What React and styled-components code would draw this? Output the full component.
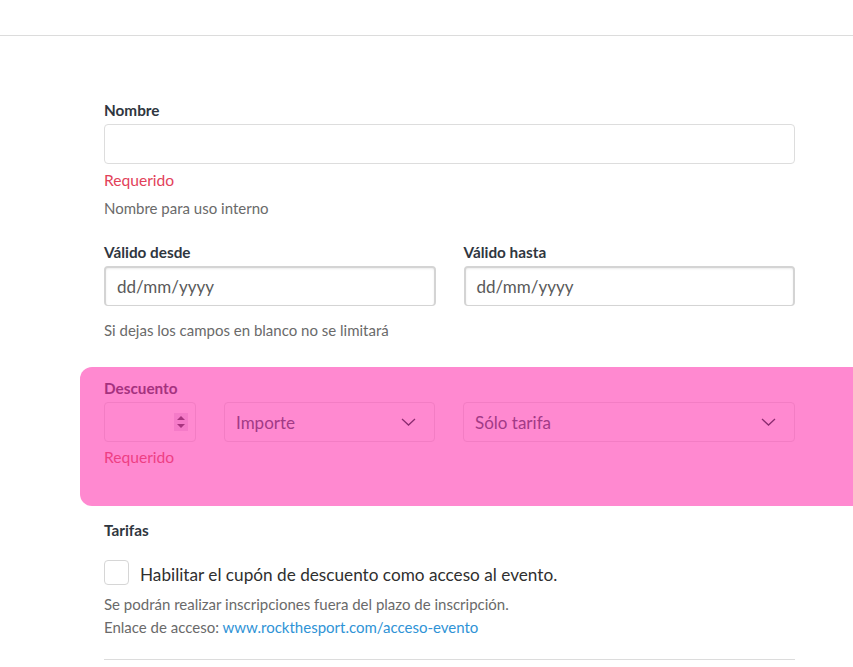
import React from "react";
import styled, { createGlobalStyle } from "styled-components";

const GlobalStyle = createGlobalStyle`
  html, body {
    margin: 0;
    padding: 0;
    background: #fff;
    font-family: Lato, "Open Sans", "Liberation Sans", sans-serif;
    overflow: hidden;
  }
`;

const Page = styled.div`
  width: 853px;
  height: 667px;
  overflow: hidden;
`;

const Header = styled.div`
  height: 35px;
  border-bottom: 1px solid #dcdcdc;
`;

const Form = styled.div`
  width: 691px;
  margin: 64px 0 0 104px;
`;

const Label = styled.div`
  font-size: 15.3px;
  line-height: 20px;
  font-weight: 700;
  color: ${p => (p.$pink ? "#a5327f" : "#2f3640")};
  margin-bottom: 4px;
`;

const TextInput = styled.div`
  box-sizing: border-box;
  height: 40px;
  border: 1px solid #dddddd;
  border-radius: 4px;
  background: #fff;
`;

const DateInput = styled.div`
  box-sizing: border-box;
  height: 40px;
  border: 2px solid #d4d4d4;
  border-bottom-width: 1px;
  border-radius: 4px;
  box-shadow: inset 0 1px 2px rgba(10, 10, 10, 0.08);
  padding: 0 11px;
  display: flex;
  align-items: center;
  font-size: 17px;
  color: #5a5a5a;
`;

const Error = styled.div`
  font-size: 15.6px;
  line-height: 22px;
  color: ${p => (p.$pink ? "#ee3f84" : "#e2415a")};
  margin-top: ${p => p.$top || 5}px;
`;

const Help = styled.div`
  font-size: 15px;
  line-height: ${p => p.$lh || 20}px;
  color: #6a6a6a;
  margin-top: ${p => p.$top || 0}px;
`;

const Link = styled.a`
  color: #2f93d6;
  text-decoration: none;
`;

const Field = styled.div`
  margin-top: ${p => p.$top || 0}px;
`;

const Row = styled.div`
  display: grid;
  grid-template-columns: ${p => p.$cols};
  column-gap: 28px;
`;

const Highlight = styled.div`
  margin: 27px -58px 0 -24px;
  padding: 11px 58px 38px 24px;
  background: #ff89d0;
  border-radius: 12px 0 0 12px;
`;

const PinkBox = styled.div`
  box-sizing: border-box;
  height: 40px;
  border: 1px solid #f37dc4;
  border-radius: 4px;
  padding: 0 18px 0 11px;
  display: flex;
  align-items: center;
  justify-content: space-between;
  font-size: 17px;
  color: #a23a86;
`;

const Spinner = styled.div`
  width: 14px;
  height: 18px;
  margin-right: -11px;
  margin-left: auto;
  background: #f57bc8;
  display: flex;
  align-items: center;
  justify-content: center;
`;

const Checkbox = styled.div`
  box-sizing: border-box;
  width: 25px;
  height: 25px;
  border: 1px solid #d6d6d6;
  border-radius: 4px;
  background: #fff;
`;

const CheckRow = styled.label`
  display: flex;
  align-items: center;
  gap: 11px;
  margin-top: 20px;
  height: 25px;
  font-size: 17.2px;
  color: #2f2f2f;
  & > span {
    margin-top: 3px;
  }
`;

const Divider = styled.div`
  border-top: 1px solid #dcdcdc;
  margin-top: 20px;
  padding-top: 3px;
`;

const Chevron = () => (
  <svg width="15" height="8" viewBox="0 0 15 8">
    <polyline points="1,1 7.5,7 14,1" fill="none" stroke="#8c2c70" strokeWidth="1.3" />
  </svg>
);

export default function App() {
  return (
    <Page>
      <GlobalStyle />
      <Header />
      <Form>
        <Field>
          <Label>Nombre</Label>
          <TextInput />
          <Error>Requerido</Error>
          <Help $top={7}>Nombre para uso interno</Help>
        </Field>

        <Field $top={24}>
          <Row $cols="1fr 1fr">
            <div>
              <Label>Válido desde</Label>
              <DateInput>dd/mm/yyyy</DateInput>
            </div>
            <div>
              <Label>Válido hasta</Label>
              <DateInput>dd/mm/yyyy</DateInput>
            </div>
          </Row>
          <Help $top={14}>Si dejas los campos en blanco no se limitará</Help>
        </Field>

        <Highlight>
          <Label $pink>Descuento</Label>
          <Row $cols="92px 211px 1fr">
            <PinkBox>
              <Spinner>
                <svg width="8" height="12" viewBox="0 0 8 12">
                  <polygon points="4,0 8,4 0,4" fill="#a8337f" />
                  <polygon points="0,8 8,8 4,12" fill="#a8337f" />
                </svg>
              </Spinner>
            </PinkBox>
            <PinkBox>
              Importe
              <Chevron />
            </PinkBox>
            <PinkBox>
              Sólo tarifa
              <Chevron />
            </PinkBox>
          </Row>
          <Error $pink $top={4}>Requerido</Error>
        </Highlight>

        <Field $top={14}>
          <Label>Tarifas</Label>
          <CheckRow>
            <Checkbox />
            <span>Habilitar el cupón de descuento como acceso al evento.</span>
          </CheckRow>
          <Help $top={8} $lh={23}>
            Se podrán realizar inscripciones fuera del plazo de inscripción.
            <br />
            Enlace de acceso: <Link href="#">www.rockthesport.com/acceso-evento</Link>
          </Help>
        </Field>

        <Divider>
          <Label>Habilitar código de acceso</Label>
        </Divider>
      </Form>
    </Page>
  );
}
